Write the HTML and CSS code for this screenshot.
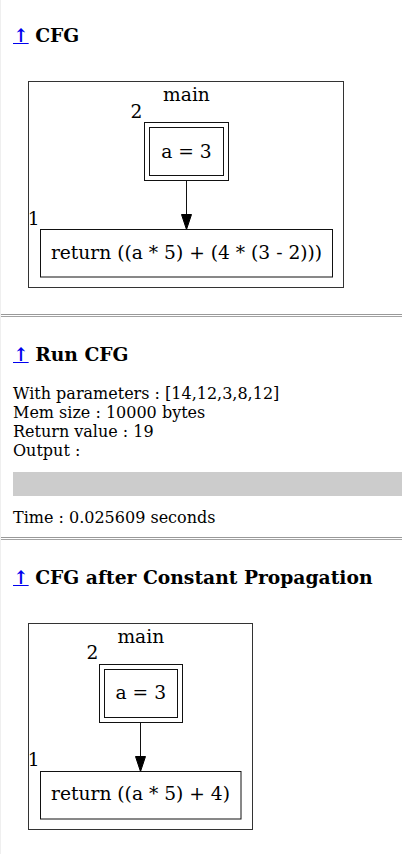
FILE: index.html
```html
<!DOCTYPE html>
<html>
<head>
<meta charset="utf-8">
<title>CFG</title>
<link rel="stylesheet" href="styles.css">
</head>
<body>
<section class="sec sec-first">
  <h3 class="title"><a class="up" href="#top">↑</a> CFG</h3>
  <svg class="graph" width="340" height="220" viewBox="0 0 340 220">
    <rect class="cluster" x="15.5" y="10.5" width="315" height="206"/>
    <text class="lbl" x="173.5" y="30" text-anchor="middle">main</text>
    <text class="lbl" x="117.5" y="46.5">2</text>
    <rect class="node" x="131.5" y="51.5" width="84" height="58"/>
    <rect class="node" x="136.5" y="56.5" width="74" height="48"/>
    <text class="lbl" x="173.5" y="86.5" text-anchor="middle">a = 3</text>
    <line class="edge" x1="173.5" y1="110" x2="173.5" y2="144"/>
    <polygon class="head" points="168.5,143.5 178.5,143.5 173.5,158.5"/>
    <text class="lbl" x="14.8" y="153.5">1</text>
    <rect class="node" x="27.5" y="158.5" width="292" height="47.5"/>
    <text class="lbl" x="173.5" y="187.5" text-anchor="middle">return ((a * 5) + (4 * (3 - 2)))</text>
  </svg>
</section>
<hr class="sep">
<section class="sec">
  <h3 class="title"><a class="up" href="#top">↑</a> Run CFG</h3>
  <div class="run">With parameters : [14,12,3,8,12]<br>Mem size : 10000 bytes<br>Return value : 19<br>Output :</div>
  <pre class="output"></pre>
  <div class="time">Time : 0.025609 seconds</div>
</section>
<hr class="sep sep-tight">
<section class="sec">
  <h3 class="title"><a class="up" href="#top">↑</a> CFG after Constant Propagation</h3>
  <svg class="graph" width="340" height="220" viewBox="0 0 340 220">
    <rect class="cluster" x="15.5" y="10.5" width="224" height="206"/>
    <text class="lbl" x="127.8" y="30" text-anchor="middle">main</text>
    <text class="lbl" x="73.5" y="46">2</text>
    <rect class="node" x="86.5" y="51.5" width="83" height="58"/>
    <rect class="node" x="91.5" y="56.5" width="73" height="48"/>
    <text class="lbl" x="127.8" y="86" text-anchor="middle">a = 3</text>
    <line class="edge" x1="127.5" y1="110" x2="127.5" y2="144"/>
    <polygon class="head" points="122.5,143.5 132.5,143.5 127.5,158.5"/>
    <text class="lbl" x="14.8" y="153">1</text>
    <rect class="node" x="27.5" y="158.5" width="200.5" height="47.5"/>
    <text class="lbl" x="127.5" y="186.5" text-anchor="middle">return ((a * 5) + 4)</text>
  </svg>
</section>
</body>
</html>
```

FILE: styles.css
```css
html, body {
  background: #fff;
}
body {
  margin: 0;
  border-left: 1px solid #efefef;
  min-height: 854px;
  font-family: "DejaVu Serif", serif;
  font-size: 16px;
  color: #000;
}
.sec {
  padding-left: 12px;
}
.sec-first {
  padding-top: 24px;
}
.title {
  margin: 26px 0 0;
  font-size: 18.72px;
  line-height: 22px;
  font-weight: bold;
}
.sec-first .title {
  margin-top: 0;
}
.up {
  color: #00e;
  text-decoration: underline;
}
.graph {
  display: block;
  margin-top: 25px;
  overflow: visible;
}
.cluster {
  fill: none;
  stroke: #333;
  stroke-width: 1;
}
.node {
  fill: none;
  stroke: #111;
  stroke-width: 1;
}
.edge {
  stroke: #111;
  stroke-width: 1;
}
.head {
  fill: #000;
  stroke: #000;
  stroke-width: 1;
}
.lbl {
  font-family: "DejaVu Serif", serif;
  font-size: 18.67px;
  fill: #000;
}
.sep {
  display: block;
  margin: 23px 0 0;
  border: 0;
  border-top: 1px solid #999;
  border-bottom: 1px solid #a3a3a3;
  height: 1px;
  background: #fff;
}
.sep-tight {
  margin-top: 10px;
}
.run {
  margin-top: 19px;
  line-height: 19px;
}
.output {
  margin: 12px 0 0;
  height: 24px;
  background: #ccc;
}
.time {
  margin-top: 12px;
  line-height: 19px;
}
```
